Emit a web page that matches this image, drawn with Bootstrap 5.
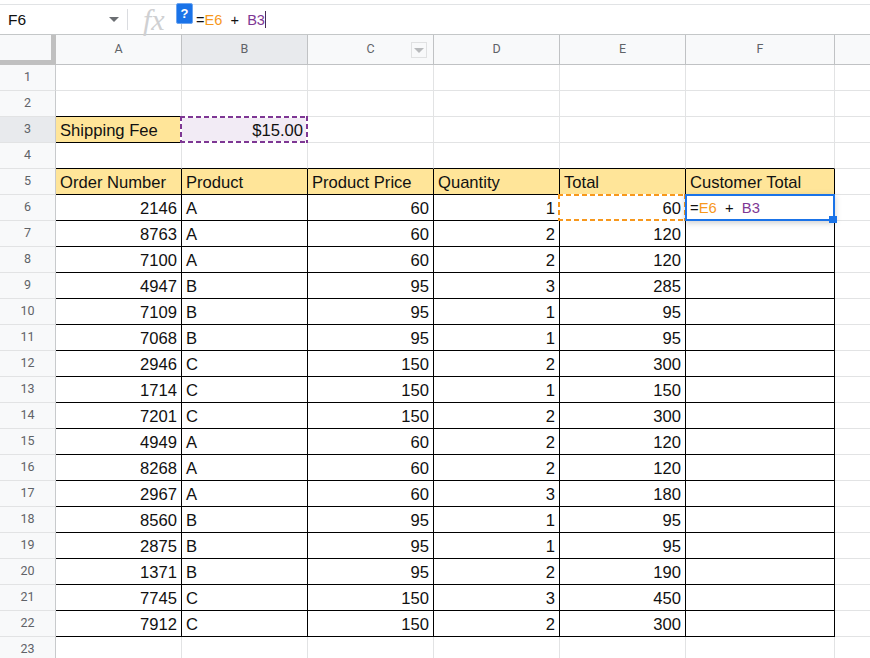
<!DOCTYPE html>
<html lang="en">
<head>
<meta charset="utf-8">
<title>Sheet</title>
<link rel="stylesheet" href="https://cdn.jsdelivr.net/npm/bootstrap@5.3.0/dist/css/bootstrap.min.css">
<style>
html,body{overflow:hidden;height:658px;background:#fff;font-family:"Liberation Sans",Arial,sans-serif;}
.topline{height:5px;border-bottom:1px solid #e1e3e5;}
.fbar{height:30px;border-bottom:1px solid #c4c7c8;}
.namebox{width:127px;padding-left:8px;font-size:15.5px;color:#111;line-height:1;}
.dropc{width:0;height:0;border-left:5px solid transparent;border-right:5px solid transparent;border-top:5px solid #6b6e72;margin-left:auto;margin-right:8px;}
.sepv{width:1px;height:21px;background:#dadce0;}
.fxlabel{width:48px;padding-left:15px;font:italic 30px/1 "Liberation Serif",serif;color:#cfd0d2;}
.formula{font-size:14.6px;white-space:pre;color:#111;padding-left:20px;line-height:1;}
.fwrap{position:relative;flex-grow:1;}
.helpq{position:absolute;left:48px;top:-2px;width:17px;height:21px;background:#1a73e8;border:1px solid #6ea6f0;border-radius:2px;color:#fff;font:bold 13px/19px "Liberation Sans",sans-serif;text-align:center;}
.fwrap::after{content:"";position:absolute;left:53px;top:19px;width:1px;height:5px;background:#c4c7c8;}
.caretbar{display:inline-block;width:1px;height:17px;background:#4a2a5a;vertical-align:-3px;}
.orng{color:#f7981d;}.purp{color:#7e3794;}
.sheet{border-collapse:separate;border-spacing:0;table-layout:fixed;width:880px;font-size:16.6px;color:#111;}
.sheet th,.sheet td{height:26px;padding:0 4px 2px 4px;line-height:19px;vertical-align:bottom;border-right:1px solid #e2e3e4;border-bottom:1px solid #e2e3e4;white-space:nowrap;}
.sheet thead th{height:30px;background:#f8f9fa;font:400 12.5px/1 Roboto,sans-serif;color:#5f6368;text-align:center;vertical-align:middle;border-right:1px solid #c0c2c4;border-bottom:1px solid #c0c2c4;padding:0;}
.sheet thead th.corner{border-right:5px solid #c0c0c0;border-bottom:5px solid #c0c0c0;background:#f8f9fa;background-clip:padding-box;}
.sheet tbody th{background:#f8f9fa;font:400 12.5px/1 Roboto,sans-serif;color:#5f6368;text-align:center;vertical-align:middle;padding:0;border-right:1px solid #c8cacc;border-bottom:1px solid #e2e3e4;}
.sheet thead th.hilite,.sheet tbody th.hilite{background:#e8eaed;}
.grid-dark td{border-color:#000;}
.grid-dark td:last-child{border-color:#e2e3e4;}
.sheet td.under{border-bottom-color:#000;}
.sheet td.dark{border-color:#000;}
.sheet td.yel{background:#ffe599;}
.sheet td.fee{background:#f2ebf5;}
.sheet .hovercell{position:relative;}
.dashp,.dasho{position:absolute;inset:-1px -1px -1px -2px;--dc:#7e3794;border:2px solid #fff;}
.dasho{--dc:#f7981d;}
.dashp::after,.dasho::after{content:"";position:absolute;inset:-2px;background:
  repeating-linear-gradient(90deg,var(--dc) 0 5px,transparent 5px 8px) left top/100% 2px no-repeat,
  repeating-linear-gradient(90deg,var(--dc) 0 5px,transparent 5px 8px) left bottom/100% 2px no-repeat,
  repeating-linear-gradient(180deg,var(--dc) 0 5px,transparent 5px 8px) left top/2px 100% no-repeat,
  repeating-linear-gradient(180deg,var(--dc) 0 5px,transparent 5px 8px) right top/2px 100% no-repeat;}
.selbox{position:absolute;inset:-1px -1px -1px -1px;border:2px solid #1a73e8;box-shadow:0 2px 6px rgba(60,64,67,.25);}
.selhandle{position:absolute;right:-3px;bottom:-3px;width:8px;height:7px;background:#1a73e8;}
.edit{position:absolute;left:4px;bottom:2px;white-space:pre;font-size:14.8px;}
.filt{position:absolute;right:6px;top:7px;width:16px;height:16px;border:1px solid #e0e1e2;display:flex;align-items:center;justify-content:center;}
.filt i{width:0;height:0;border-left:5px solid transparent;border-right:5px solid transparent;border-top:5px solid #b8babc;}
</style>
</head>
<body class="m-0">
<div class="topline"></div>
<div class="fbar d-flex align-items-center">
  <div class="namebox d-flex align-items-center"><span>F6</span><span class="dropc"></span></div>
  <div class="sepv"></div>
  <div class="fwrap d-flex align-items-center">
    <span class="fxlabel">fx</span>
    <span class="helpq">?</span>
    <span class="formula">=<span class="orng">E6</span>  +  <span class="purp">B3</span><span class="caretbar"></span></span>
  </div>
</div>
<table class="sheet">
<colgroup><col style="width:56px"><col style="width:126px"><col style="width:126px"><col style="width:126px"><col style="width:126px"><col style="width:126px"><col style="width:149px"><col></colgroup>
<thead><tr><th class="corner"></th><th>A</th><th class="hilite">B</th><th class="position-relative">C<span class="filt"><i></i></span></th><th>D</th><th>E</th><th>F</th><th></th></tr></thead>
<tbody>
<tr><th>1</th><td></td><td></td><td></td><td></td><td></td><td></td><td></td></tr>
<tr><th>2</th><td class="under"></td><td class="under"></td><td></td><td></td><td></td><td></td><td></td></tr>
<tr><th class="hilite">3</th><td class="dark yel">Shipping Fee</td><td class="dark fee text-end hovercell">$15.00<span class="dashp"></span></td><td></td><td></td><td></td><td></td><td></td></tr>
<tr><th>4</th><td class="under"></td><td class="under"></td><td class="under"></td><td class="under"></td><td class="under"></td><td class="under"></td><td></td></tr>
<tr class="grid-dark"><th>5</th><td class="yel">Order Number</td><td class="yel">Product</td><td class="yel">Product Price</td><td class="yel">Quantity</td><td class="yel">Total</td><td class="yel">Customer Total</td><td></td></tr>
<tr class="grid-dark"><th>6</th><td class="text-end">2146</td><td>A</td><td class="text-end">60</td><td class="text-end">1</td><td class="text-end hovercell">60<span class="dasho"></span></td><td class="hovercell"><span class="edit">=<span class="orng">E6</span>  +  <span class="purp">B3</span></span><span class="selbox"></span><span class="selhandle"></span></td><td></td></tr>
<tr class="grid-dark"><th>7</th><td class="text-end">8763</td><td>A</td><td class="text-end">60</td><td class="text-end">2</td><td class="text-end">120</td><td></td><td></td></tr>
<tr class="grid-dark"><th>8</th><td class="text-end">7100</td><td>A</td><td class="text-end">60</td><td class="text-end">2</td><td class="text-end">120</td><td></td><td></td></tr>
<tr class="grid-dark"><th>9</th><td class="text-end">4947</td><td>B</td><td class="text-end">95</td><td class="text-end">3</td><td class="text-end">285</td><td></td><td></td></tr>
<tr class="grid-dark"><th>10</th><td class="text-end">7109</td><td>B</td><td class="text-end">95</td><td class="text-end">1</td><td class="text-end">95</td><td></td><td></td></tr>
<tr class="grid-dark"><th>11</th><td class="text-end">7068</td><td>B</td><td class="text-end">95</td><td class="text-end">1</td><td class="text-end">95</td><td></td><td></td></tr>
<tr class="grid-dark"><th>12</th><td class="text-end">2946</td><td>C</td><td class="text-end">150</td><td class="text-end">2</td><td class="text-end">300</td><td></td><td></td></tr>
<tr class="grid-dark"><th>13</th><td class="text-end">1714</td><td>C</td><td class="text-end">150</td><td class="text-end">1</td><td class="text-end">150</td><td></td><td></td></tr>
<tr class="grid-dark"><th>14</th><td class="text-end">7201</td><td>C</td><td class="text-end">150</td><td class="text-end">2</td><td class="text-end">300</td><td></td><td></td></tr>
<tr class="grid-dark"><th>15</th><td class="text-end">4949</td><td>A</td><td class="text-end">60</td><td class="text-end">2</td><td class="text-end">120</td><td></td><td></td></tr>
<tr class="grid-dark"><th>16</th><td class="text-end">8268</td><td>A</td><td class="text-end">60</td><td class="text-end">2</td><td class="text-end">120</td><td></td><td></td></tr>
<tr class="grid-dark"><th>17</th><td class="text-end">2967</td><td>A</td><td class="text-end">60</td><td class="text-end">3</td><td class="text-end">180</td><td></td><td></td></tr>
<tr class="grid-dark"><th>18</th><td class="text-end">8560</td><td>B</td><td class="text-end">95</td><td class="text-end">1</td><td class="text-end">95</td><td></td><td></td></tr>
<tr class="grid-dark"><th>19</th><td class="text-end">2875</td><td>B</td><td class="text-end">95</td><td class="text-end">1</td><td class="text-end">95</td><td></td><td></td></tr>
<tr class="grid-dark"><th>20</th><td class="text-end">1371</td><td>B</td><td class="text-end">95</td><td class="text-end">2</td><td class="text-end">190</td><td></td><td></td></tr>
<tr class="grid-dark"><th>21</th><td class="text-end">7745</td><td>C</td><td class="text-end">150</td><td class="text-end">3</td><td class="text-end">450</td><td></td><td></td></tr>
<tr class="grid-dark"><th>22</th><td class="text-end">7912</td><td>C</td><td class="text-end">150</td><td class="text-end">2</td><td class="text-end">300</td><td></td><td></td></tr>
<tr><th>23</th><td></td><td></td><td></td><td></td><td></td><td></td><td></td></tr>
</tbody>
</table>
<script src="https://cdn.jsdelivr.net/npm/bootstrap@5.3.0/dist/js/bootstrap.bundle.min.js"></script>
</body>
</html>
